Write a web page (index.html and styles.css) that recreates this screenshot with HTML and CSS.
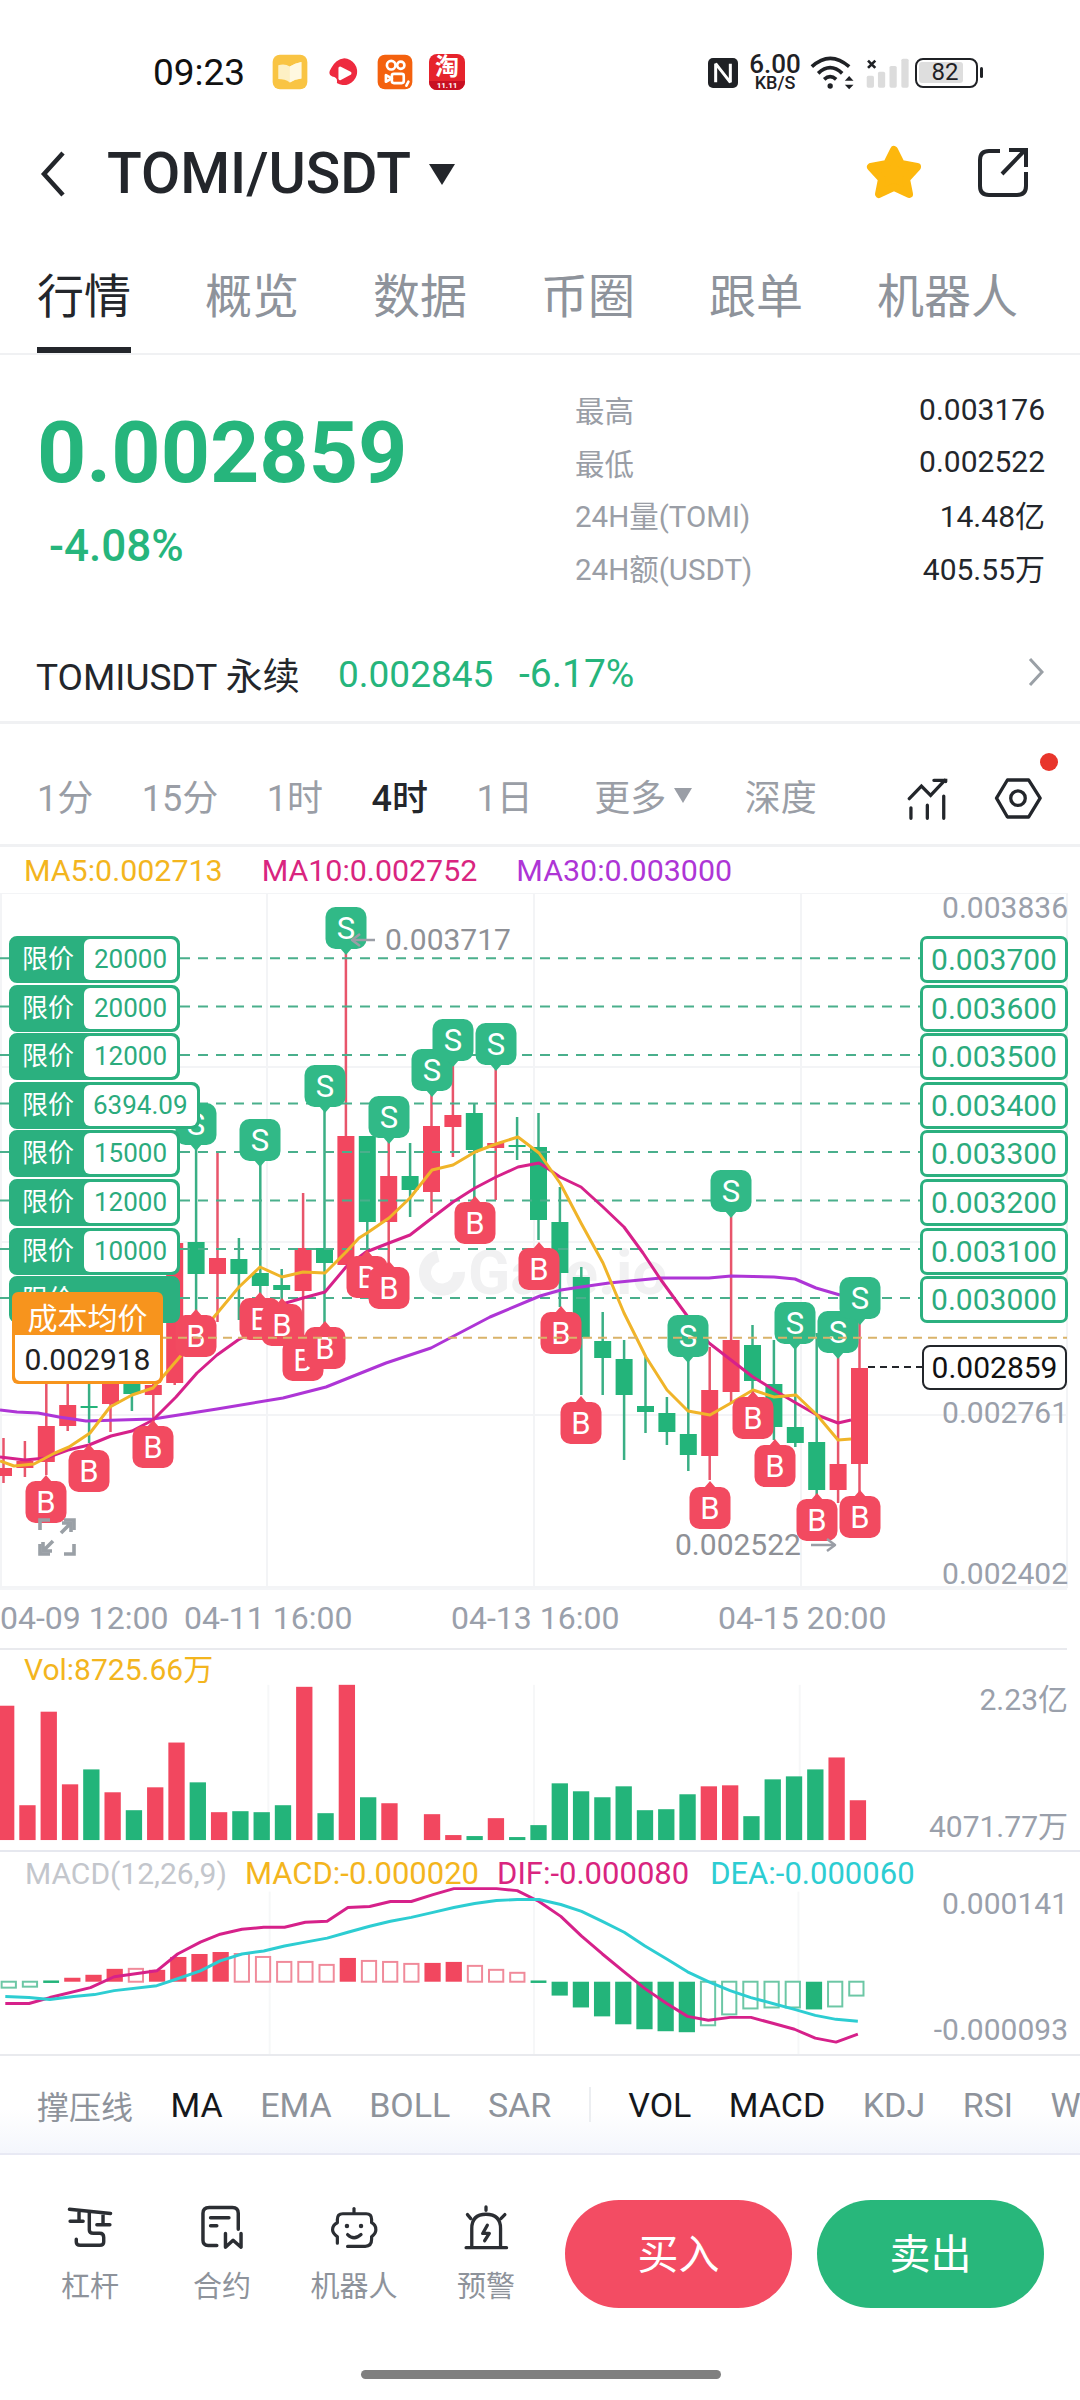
FILE: index.html
```html
<!DOCTYPE html>
<html lang="zh-CN">

<head>
    <meta charset="UTF-8">
    <meta name="viewport" content="width=device-width, initial-scale=1.0">
    <title>TOMI/USDT</title>
    <link rel="stylesheet" href="styles.css">
</head>

<body>
    <!-- 상태바 -->
    <div class="statusBar">
        <span class="clock">09:23</span>
        <svg class="appIcon" viewBox="30 25 115 115">
            <rect x="35" y="30" width="105" height="105" rx="22" fill="#f9c443" />
            <path d="M52 62 Q72 56 87 66 Q102 56 122 52 V102 Q102 104 87 114 Q72 104 52 104 Z" fill="#fdf0c4" />
            <path d="M87 66 Q102 56 122 52 V102 Q102 104 87 114 Z" fill="#fff8e0" />
        </svg>
        <svg class="appIconRed" viewBox="195 38 95 92">
            <path d="M245 42 A41 41 0 1 1 222 118 Q226 100 208 98 Q192 92 205 72 Q218 46 245 42 Z" fill="#ee2a3f" />
            <path d="M232 72 L262 88 L232 104 Z" fill="#fff" stroke="#fff" stroke-width="10" stroke-linejoin="round" />
        </svg>
        <svg class="appIconOrange" viewBox="342 25 115 115">
            <rect x="347" y="30" width="105" height="105" rx="22" fill="#f4610e" />
            <g fill="none" stroke="#fff" stroke-width="8">
                <circle cx="388" cy="62" r="13" />
                <circle cx="417" cy="62" r="11" />
                <rect x="390" y="88" width="36" height="28" rx="6" />
                <path d="M390 102 L372 92 V112 Z" stroke-linejoin="round" />
                <path d="M440 112 L434 124" stroke-linecap="round" />
            </g>
        </svg>
        <div class="taobao">
            <span class="taobaoWord">淘</span>
            <span class="taobaoDate">11.11</span>
        </div>
        <div class="statusRight">
            <div class="nfcBadge">
                <svg viewBox="25 35 88 90" width="30" height="30">
                    <path d="M47 108 V52 L91 108 V52" fill="none" stroke="#fff" stroke-width="9" stroke-linejoin="bevel" />
                </svg>
            </div>
            <div class="netSpeed">
                <span class="netNum">6.00</span>
                <span class="netUnit">KB/S</span>
            </div>
            <svg class="wifiIcon" viewBox="325 25 140 105">
                <g fill="none" stroke="#1f2125" stroke-width="11">
                    <path d="M333 60 Q388 10 445 60" />
                    <path d="M352 80 Q388 46 424 80" />
                    <path d="M370 98 Q388 82 406 98" />
                </g>
                <circle cx="388" cy="118" r="8" fill="#1f2125" />
                <path d="M432 102 L445 88 L458 102 Z M432 114 H458 L445 128 Z" fill="#1f2125" />
            </svg>
            <svg class="signalIcon" viewBox="490 30 140 100">
                <path d="M501 44 L523 66 M523 44 L501 66" stroke="#1f2125" stroke-width="8" />
                <g fill="#dcdcdc">
                    <rect x="497" y="90" width="22" height="36" rx="5" />
                    <rect x="531" y="78" width="22" height="48" rx="5" />
                    <rect x="566" y="60" width="22" height="66" rx="5" />
                    <rect x="602" y="38" width="22" height="88" rx="5" />
                </g>
            </svg>
            <div class="battery">
                <div class="batteryBox"><span class="batteryFill">82</span></div>
                <span class="batteryTip"></span>
            </div>
        </div>
    </div>

    <!-- 상단 타이틀 -->
    <div class="navBar">
        <svg class="backIcon" viewBox="0 0 26 46">
            <path d="M23 2 L4 23 L23 44" fill="none" stroke="#23262b" stroke-width="4.5" />
        </svg>
        <h1 class="pairName">TOMI/USDT</h1>
        <span class="pairArrow"></span>
        <svg class="starIcon" viewBox="0 0 58 56">
            <path d="M29 6 L36 20 L52 23 L41 35 L44 50 L29 43 L14 50 L17 35 L6 23 L22 20 Z" fill="#fdb70d" stroke="#fdb70d" stroke-width="8" stroke-linejoin="round" />
        </svg>
        <svg class="shareIcon" viewBox="979 147 51 51">
            <g fill="none" stroke="#23262b" stroke-width="4">
                <path d="M1001 151 H990 Q981 151 981 160 V186 Q981 195 990 195 H1018 Q1027 195 1027 186 V172" />
                <path d="M1003 174 L1026 150 M1010 150 H1027 V167" />
            </g>
        </svg>
    </div>

    <!-- 탭 메뉴 -->
    <ul class="tabMenu">
        <li class="tabSelect">行情</li>
        <li>概览</li>
        <li>数据</li>
        <li>币圈</li>
        <li>跟单</li>
        <li>机器人</li>
    </ul>

    <!-- 시세 요약 -->
    <div class="summary">
        <div class="priceBox">
            <div class="lastPrice">0.002859</div>
            <div class="changeRate">-4.08%</div>
        </div>
        <dl class="statList">
            <div class="statRow"><dt>最高</dt><dd>0.003176</dd></div>
            <div class="statRow"><dt>最低</dt><dd>0.002522</dd></div>
            <div class="statRow"><dt>24H量(TOMI)</dt><dd>14.48亿</dd></div>
            <div class="statRow"><dt>24H额(USDT)</dt><dd>405.55万</dd></div>
        </dl>
    </div>

    <div class="perpRow">
        <span class="perpName">TOMIUSDT 永续</span>
        <span class="perpPrice">0.002845</span>
        <span class="perpRate">-6.17%</span>
        <svg class="perpArrow" viewBox="0 0 16 30">
            <path d="M2 2 L14 15 L2 28" fill="none" stroke="#9aa0a6" stroke-width="3" />
        </svg>
    </div>

    <!-- 기간 선택 -->
    <div class="periodRow">
        <span>1分</span>
        <span>15分</span>
        <span>1时</span>
        <span class="periodSelect">4时</span>
        <span>1日</span>
        <span class="periodMore">更多<i class="moreArrow"></i></span>
        <span class="periodDepth">深度</span>
        <svg class="drawIcon" viewBox="28 100 125 132">
            <g fill="none" stroke="#23262b" stroke-width="10" stroke-linecap="round">
                <path d="M35 168 L72 130 L100 158 L143 112" />
                <path d="M110 112 H146 V116" />
                <path d="M40 196 V228 M90 188 V228 M140 160 V228" />
            </g>
        </svg>
        <div class="settingBox">
            <svg class="hexIcon" viewBox="288 104 144 124">
                <path d="M295 165 L328 110 H392 L427 165 L392 222 H328 Z" fill="none" stroke="#23262b" stroke-width="10" stroke-linejoin="round" />
                <circle cx="360" cy="165" r="22" fill="none" stroke="#23262b" stroke-width="10" />
            </svg>
            <span class="redDot"></span>
        </div>
    </div>

    <div class="maRow">
        <span class="maFive">MA5:0.002713</span>
        <span class="maTen">MA10:0.002752</span>
        <span class="maThirty">MA30:0.003000</span>
    </div>

    <!-- 메인 차트 -->
    <div class="klineBox">
        <svg class="chartSvg" id="klineSvg" viewBox="0 893 1080 695"></svg>

        <span class="axisLabel axisTop">0.003836</span>
        <span class="axisLabel axisMid">0.002761</span>
        <span class="axisLabel axisLow">0.002402</span>
        <span class="extreme extremeHigh">0.003717</span>
        <span class="extreme extremeLow">0.002522</span>

        <div class="limitLeft">
            <div class="limitTag"><span class="limitName">限价</span><span class="limitQty">20000</span></div>
            <div class="limitTag"><span class="limitName">限价</span><span class="limitQty">20000</span></div>
            <div class="limitTag"><span class="limitName">限价</span><span class="limitQty">12000</span></div>
            <div class="limitTag"><span class="limitName">限价</span><span class="limitQty">6394.09</span></div>
            <div class="limitTag"><span class="limitName">限价</span><span class="limitQty">15000</span></div>
            <div class="limitTag"><span class="limitName">限价</span><span class="limitQty">12000</span></div>
            <div class="limitTag"><span class="limitName">限价</span><span class="limitQty">10000</span></div>
            <div class="limitTag limitLast"><span class="limitName">限价</span></div>
        </div>

        <div class="limitRight">
            <div class="limitPrice">0.003700</div>
            <div class="limitPrice">0.003600</div>
            <div class="limitPrice">0.003500</div>
            <div class="limitPrice">0.003400</div>
            <div class="limitPrice">0.003300</div>
            <div class="limitPrice">0.003200</div>
            <div class="limitPrice">0.003100</div>
            <div class="limitPrice">0.003000</div>
        </div>

        <div class="costTag">
            <div class="costTitle">成本均价</div>
            <div class="costValue">0.002918</div>
        </div>

        <div class="nowPrice">0.002859</div>

        <svg class="fullIcon" viewBox="0 0 38 38">
            <g fill="none" stroke="#9aa0a6" stroke-width="3.6">
                <path d="M2 12 V2 H12 M26 2 H36 V12 M2 26 V36 H12 M36 26 V36 H26" />
                <path d="M33 5 L23 15 M24 5 H33 V14 M5 33 L15 23 M5 24 V33 H14" />
            </g>
        </svg>
    </div>

    <div class="timeAxis">
        <span>04-09 12:00</span>
        <span>04-11 16:00</span>
        <span>04-13 16:00</span>
        <span>04-15 20:00</span>
    </div>

    <!-- 거래량 -->
    <div class="volPanel">
        <svg class="chartSvg" id="volSvg" viewBox="0 1650 1080 201"></svg>
        <div class="panelLegend"><span class="maFive">Vol:8725.66万</span></div>
        <span class="axisLabel volTop">2.23亿</span>
        <span class="axisLabel volLow">4071.77万</span>
    </div>

    <!-- MACD -->
    <div class="macdPanel">
        <svg class="chartSvg" id="macdSvg" viewBox="0 1852 1080 204"></svg>
        <div class="panelLegend macdLegend">
            <span class="macdName">MACD(12,26,9)</span>
            <span class="maFive">MACD:-0.000020</span>
            <span class="maTen">DIF:-0.000080</span>
            <span class="deaText">DEA:-0.000060</span>
        </div>
        <span class="axisLabel macdTop">0.000141</span>
        <span class="axisLabel macdLow">-0.000093</span>
    </div>

    <!-- 지표 선택 -->
    <div class="indicatorRow">
        <span class="indicatorFirst">撑压线</span>
        <span class="indicatorOn">MA</span>
        <span>EMA</span>
        <span>BOLL</span>
        <span>SAR</span>
        <i class="indicatorLine"></i>
        <span class="indicatorOn">VOL</span>
        <span class="indicatorOn">MACD</span>
        <span>KDJ</span>
        <span>RSI</span>
        <span>WR</span>
    </div>

    <!-- 하단 버튼 -->
    <div class="bottomBar">
        <div class="toolItem">
            <svg class="toolIcon" viewBox="50 48 140 130">
                <g fill="none" stroke="#2b2e33" stroke-width="10" stroke-linecap="round">
                    <path d="M60 60 L180 72 M88 63 V95 M62 95 H100 M158 72 V105 M140 105 H178" />
                    <path d="M118 68 V120 Q118 130 130 130 H148 Q160 130 160 142 V155 Q160 165 148 165 H92 Q80 165 80 155 V147" />
                </g>
            </svg>
            <span>杠杆</span>
        </div>
        <div class="toolItem">
            <svg class="toolIcon" viewBox="450 48 130 130">
                <g fill="none" stroke="#2b2e33" stroke-width="10" stroke-linecap="round" stroke-linejoin="round">
                    <path d="M500 165 H475 Q460 165 460 150 V72 Q460 55 478 55 H545 Q562 55 562 72 V118" />
                    <path d="M482 85 H535 M482 108 H500" />
                    <path d="M525 130 V170 L547 150 L570 170 V130" />
                </g>
            </svg>
            <span>合约</span>
        </div>
        <div class="toolItem">
            <svg class="toolIcon" viewBox="835 48 150 130">
                <g fill="none" stroke="#2b2e33" stroke-width="10" stroke-linecap="round" stroke-linejoin="round">
                    <path d="M910 54 V68" />
                    <path d="M890 172 H945 Q965 172 965 150 V142 Q980 130 978 118 Q978 105 965 98 V88 Q965 70 948 70 H875 Q858 70 858 88 V98 Q843 105 843 120 Q843 130 858 142 V162" />
                    <path d="M890 135 Q910 155 932 135" />
                </g>
                <circle cx="888" cy="108" r="7" fill="#2b2e33" />
                <circle cx="932" cy="108" r="7" fill="#2b2e33" />
            </svg>
            <span>机器人</span>
        </div>
        <div class="toolItem">
            <svg class="toolIcon" viewBox="1240 44 136 136">
                <g fill="none" stroke="#2b2e33" stroke-width="10" stroke-linecap="round" stroke-linejoin="round">
                    <path d="M1248 173 H1370" />
                    <path d="M1265 170 V115 Q1265 72 1308 72 Q1352 72 1352 115 V170" />
                    <path d="M1308 50 V60 M1252 73 L1262 85 M1365 73 L1353 85" />
                    <path d="M1312 105 L1298 130 H1318 L1304 152" />
                </g>
            </svg>
            <span>预警</span>
        </div>
        <div class="tradeBtn buyBtn">买入</div>
        <div class="tradeBtn sellBtn">卖出</div>
    </div>

    <div class="homeBar"></div>

    <script src="chart.js"></script>
</body>

</html>
```

FILE: styles.css
```css
* {
    box-sizing: border-box;
}

body {
    margin: 0;
    width: 1080px;
    height: 2400px;
    overflow: hidden;
    background-color: white;
    color: #23262b;
    font-family: Roboto, "Noto Sans CJK SC", sans-serif;
}

svg {
    display: block;
}

/* status bar */
.statusBar {
    display: flex;
    align-items: center;
    height: 144px;
    padding-left: 153px;
}

.clock {
    font-size: 37px;
    font-weight: 400;
    color: #111;
    width: 118px;
}

.appIcon {
    width: 38px;
    height: 38px;
    margin-right: 19px;
}

.appIconRed {
    width: 31px;
    height: 30px;
    margin-right: 17px;
}

.appIconOrange {
    width: 38px;
    height: 38px;
    margin-right: 15px;
}

.taobao {
    width: 36px;
    height: 36px;
    border-radius: 8px;
    background-color: #e6232c;
    color: white;
    display: flex;
    flex-direction: column;
    align-items: center;
    overflow: hidden;
}

.taobaoWord {
    font-size: 24px;
    line-height: 27px;
    font-weight: 700;
}

.taobaoDate {
    font-size: 8px;
    line-height: 9px;
    font-weight: 700;
    width: 100%;
    text-align: center;
    background-color: #c81022;
}

.statusRight {
    display: flex;
    align-items: center;
    position: absolute;
    left: 708px;
    top: 54px;
}

.nfcBadge {
    width: 30px;
    height: 30px;
    border-radius: 5px;
    background-color: #1f2125;
    margin-right: 11px;
}

.netSpeed {
    display: flex;
    flex-direction: column;
    align-items: center;
    width: 52px;
    margin-right: 8px;
    color: #1f2125;
}

.netNum {
    font-size: 26px;
    line-height: 20px;
    font-weight: 500;
}

.netUnit {
    font-size: 18px;
    line-height: 17px;
    font-weight: 500;
}

.wifiIcon {
    width: 47px;
    height: 35px;
    margin-right: 8px;
}

.signalIcon {
    width: 47px;
    height: 33px;
    margin-right: 4px;
}

.battery {
    display: flex;
    align-items: center;
}

.batteryBox {
    width: 63px;
    height: 30px;
    border: 2.5px solid #1f2125;
    border-radius: 8px;
    padding: 2px;
}

.batteryFill {
    display: block;
    width: 44px;
    height: 21px;
    border-radius: 3px;
    background-color: #dedede;
    font-size: 24px;
    line-height: 21px;
    text-align: center;
    color: #1f2125;
    padding-left: 8px;
    white-space: nowrap;
}

.batteryTip {
    width: 3px;
    height: 11px;
    margin-left: 2px;
    background-color: #1f2125;
    border-radius: 2px;
}

/* title bar */
.navBar {
    display: flex;
    align-items: center;
    height: 60px;
    padding-left: 40px;
}

.backIcon {
    width: 26px;
    height: 46px;
}

.pairName {
    margin: 0 0 0 41px;
    font-size: 57px;
    font-weight: 500;
    line-height: 60px;
    color: #23262b;
}

.pairArrow {
    width: 0;
    height: 0;
    margin-left: 18px;
    border-left: 13px solid transparent;
    border-right: 13px solid transparent;
    border-top: 21px solid #23262b;
}

.starIcon {
    width: 58px;
    height: 56px;
    position: absolute;
    left: 865px;
    top: 144px;
}

.shareIcon {
    width: 51px;
    height: 51px;
    position: absolute;
    left: 978px;
    top: 147px;
}

/* tabs */
.tabMenu {
    display: flex;
    gap: 74px;
    margin: 0;
    padding: 66px 0 0 37px;
    height: 151px;
    list-style: none;
    border-bottom: 2px solid #f0f1f3;
}

.tabMenu li {
    font-size: 47px;
    line-height: 54px;
    height: 83px;
    color: #8e939b;
}

.tabMenu li.tabSelect {
    color: #23262b;
    border-bottom: 6px solid #23262b;
}

/* summary */
.summary {
    display: flex;
    height: 274px;
}

.priceBox {
    width: 575px;
    padding: 54px 0 0 37px;
}

.lastPrice {
    font-size: 86px;
    line-height: 88px;
    font-weight: 700;
    color: #26b57c;
}

.changeRate {
    margin-top: 25px;
    padding-left: 12px;
    font-size: 44px;
    line-height: 48px;
    font-weight: 500;
    color: #26b57c;
}

.statList {
    width: 470px;
    margin: 0;
    padding-top: 28px;
}

.statRow {
    display: flex;
    justify-content: space-between;
    height: 52.5px;
    align-items: center;
}

.statRow dt {
    font-size: 29.5px;
    color: #9a9ea6;
}

.statRow dd {
    margin: 0;
    font-size: 30px;
    color: #23262b;
}

/* perpetual row */
.perpRow {
    display: flex;
    align-items: center;
    height: 95px;
    padding: 0 0 2px 36px;
    border-bottom: 3px solid #f0f1f3;
    font-size: 37px;
}

.perpName {
    width: 302px;
}

.perpPrice {
    color: #26b57c;
    width: 181px;
}

.perpRate {
    color: #26b57c;
    font-size: 39px;
}

.perpArrow {
    width: 16px;
    height: 30px;
    margin-left: auto;
    margin-right: 36px;
    margin-bottom: 4px;
}

/* period row */
.periodRow {
    display: flex;
    align-items: center;
    gap: 48.5px;
    height: 123px;
    padding: 22px 0 0 37px;
    border-bottom: 3px solid #f0f1f3;
    font-size: 36px;
    color: #9a9ea6;
}

.periodSelect {
    color: #23262b;
    font-weight: 500;
}

.periodMore {
    display: flex;
    align-items: center;
    margin-left: 13px;
}

.moreArrow {
    width: 0;
    height: 0;
    margin-left: 8px;
    border-left: 9px solid transparent;
    border-right: 9px solid transparent;
    border-top: 15px solid #9a9ea6;
}

.periodDepth {
    margin-left: 4px;
}

.drawIcon {
    width: 41px;
    height: 44px;
    margin-left: 42px;
    margin-top: 6px;
}

.settingBox {
    position: relative;
    margin-left: -3px;
    margin-top: 6px;
}

.hexIcon {
    width: 48px;
    height: 41px;
}

.redDot {
    position: absolute;
    left: 46px;
    top: -25px;
    width: 18px;
    height: 18px;
    border-radius: 50%;
    background-color: #e8352b;
}

/* MA legend */
.maRow {
    display: flex;
    gap: 39px;
    align-items: center;
    height: 46px;
    padding-left: 24px;
    font-size: 30.4px;
}

.maFive {
    color: #f3b51e;
}

.maTen {
    color: #d9257f;
}

.maThirty {
    color: #ae35d6;
}

/* main chart */
.klineBox {
    position: relative;
    height: 695px;
}

.chartSvg {
    position: absolute;
    left: 0;
    top: 0;
    width: 100%;
    height: 100%;
}

.axisLabel {
    position: absolute;
    right: 12px;
    font-size: 30px;
    line-height: 36px;
    color: #9aa0ab;
}

.axisTop {
    top: -3px;
}

.axisMid {
    top: 502px;
}

.axisLow {
    top: 663px;
}

.extreme {
    position: absolute;
    font-size: 30px;
    line-height: 36px;
    color: #8e9096;
}

.extremeHigh {
    left: 385px;
    top: 29px;
}

.extremeLow {
    left: 675px;
    top: 634px;
}

.limitLeft,
.limitRight {
    position: absolute;
    top: 43px;
    display: flex;
    flex-direction: column;
    gap: 1.6px;
}

.limitLeft {
    left: 9px;
    align-items: flex-start;
}

.limitRight {
    left: 920px;
}

.limitTag {
    display: flex;
    height: 47px;
    border: 3px solid #2bb07f;
    border-radius: 8px;
    background-color: #2bb07f;
}

.limitLast {
    width: 171px;
}

.limitName {
    width: 72px;
    padding-left: 10px;
    font-size: 26px;
    line-height: 40px;
    color: white;
}

.limitQty {
    min-width: 93px;
    padding: 0 9px;
    background-color: white;
    border-radius: 6px;
    font-size: 26px;
    line-height: 41px;
    color: #2bab7d;
    text-align: center;
}

.limitPrice {
    width: 148px;
    height: 47px;
    border: 3px solid #2bb07f;
    border-radius: 7px;
    background-color: white;
    font-size: 30px;
    line-height: 41px;
    text-align: center;
    color: #2bab7d;
}

.costTag {
    position: absolute;
    left: 12px;
    top: 399px;
    width: 151px;
    height: 92px;
    border-radius: 6px;
    background-color: #f7941d;
    padding: 6px 3px 3px;
}

.costTitle {
    height: 37px;
    font-size: 30px;
    line-height: 41px;
    color: white;
    text-align: center;
}

.costValue {
    height: 46px;
    border-radius: 0 0 5px 5px;
    background-color: white;
    font-size: 30px;
    line-height: 49px;
    color: #222;
    text-align: center;
}

.nowPrice {
    position: absolute;
    left: 922px;
    top: 452px;
    width: 145px;
    height: 45px;
    border: 2px solid #23262b;
    border-radius: 8px;
    background-color: white;
    font-size: 30px;
    line-height: 41px;
    text-align: center;
    color: #111;
}

.fullIcon {
    position: absolute;
    left: 38px;
    top: 625px;
    width: 38px;
    height: 38px;
}

/* time axis */
.timeAxis {
    display: flex;
    align-items: center;
    width: 1067px;
    height: 62px;
    padding: 0 0 2px 0;
    border-bottom: 2px solid #e9eaee;
    border-top: 2px solid #f4f5f7;
    font-size: 32px;
    color: #9aa0ab;
}

.timeAxis span {
    width: 167px;
    margin-right: 100px;
    white-space: nowrap;
}

.timeAxis span:first-child {
    margin-right: 17px;
}

/* volume and macd panels */
.volPanel {
    position: relative;
    height: 202px;
    border-bottom: 2px solid #e6e8ef;
}

.macdPanel {
    position: relative;
    height: 204px;
    border-bottom: 2px solid #e9eaee;
    overflow: hidden;
}

.panelLegend {
    position: relative;
    padding: 2px 0 0 24px;
    font-size: 30px;
    line-height: 36px;
    white-space: nowrap;
}

.macdLegend {
    display: flex;
    gap: 18px;
    padding: 4px 0 0 25px;
    font-size: 31px;
}

.macdName {
    color: #c3c6cc;
    font-size: 30px;
}

.deaText {
    color: #2dcdd2;
    margin-left: 3px;
}

.volTop {
    top: 32px;
}

.volLow {
    top: 159px;
}

.macdTop {
    top: 34px;
}

.macdLow {
    top: 160px;
}

/* indicator row */
.indicatorRow {
    display: flex;
    align-items: center;
    gap: 37.5px;
    height: 99px;
    padding: 0 0 0 37px;
    overflow: hidden;
    white-space: nowrap;
    font-size: 34px;
    color: #8e939b;
    background: linear-gradient(#ffffff 55%, #f4f6fc);
    border-bottom: 2px solid #e8e9f4;
}

.indicatorFirst {
    font-size: 32px;
}

.indicatorOn {
    color: #15181c;
}

.indicatorLine {
    flex: none;
    width: 2px;
    height: 35px;
    background-color: #eceef1;
}

/* bottom bar */
.bottomBar {
    display: flex;
    align-items: flex-start;
    padding: 45px 0 0 24px;
    height: 153px;
}

.toolItem {
    display: flex;
    flex-direction: column;
    align-items: center;
    width: 132px;
    padding-top: 5px;
    font-size: 29px;
    line-height: 40px;
    color: #8e939b;
}

.toolIcon {
    width: 48px;
    height: 45px;
    margin-bottom: 17px;
}

.tradeBtn {
    width: 227px;
    height: 108px;
    border-radius: 54px;
    font-size: 41px;
    line-height: 110px;
    text-align: center;
    color: white;
}

.buyBtn {
    margin-left: 13px;
    background-color: #f34c63;
}

.sellBtn {
    margin-left: 25px;
    background-color: #28b77b;
}

.homeBar {
    width: 360px;
    height: 9px;
    margin: 62px 0 0 361px;
    border-radius: 5px;
    background-color: #7f7f7f;
}
```

FILE: chart.js
```js
var RED = '#f2475f';
var GREEN = '#23b47a';
var NS = 'http://www.w3.org/2000/svg';

// 봉 위치: n번째 봉의 x 좌표
function barX(n) {
    return 3.5 + 21.4 * n;
}

// svg 요소 생성
function add(parent, tag, attrs, text) {
    var el = document.createElementNS(NS, tag);
    for (var key in attrs) {
        el.setAttribute(key, attrs[key]);
    }
    if (text) {
        el.textContent = text;
    }
    parent.appendChild(el);
    return el;
}

function polyline(parent, points, color, width) {
    add(parent, 'polyline', {
        points: points.map(function (p) { return p[0] + ',' + p[1]; }).join(' '),
        fill: 'none',
        stroke: color,
        'stroke-width': width,
        'stroke-linejoin': 'round'
    });
}

function hLine(parent, x1, x2, y, color, width, dash) {
    var attrs = { x1: x1, x2: x2, y1: y, y2: y, stroke: color, 'stroke-width': width };
    if (dash) {
        attrs['stroke-dasharray'] = dash;
    }
    add(parent, 'line', attrs);
}

function vLine(parent, x, y1, y2, color, width) {
    add(parent, 'line', { x1: x, x2: x, y1: y1, y2: y2, stroke: color, 'stroke-width': width });
}

// 봉 데이터: [상승여부, 꼬리위, 꼬리아래, 몸통위, 몸통아래]
var candles = [
    [1, 1438, 1483, 1468, 1476], [1, 1441, 1477, 1461, 1468], [1, 1380, 1475, 1426, 1462],
    [1, 1380, 1431, 1405, 1426], [0, 1380, 1443, 1406, 1408], [1, 1370, 1432, 1370, 1404],
    [0, 1375, 1411, 1375, 1394], [1, 1378, 1426, 1385, 1395], [1, 1243, 1385, 1243, 1383],
    [0, 1147, 1312, 1242, 1274], [1, 1152, 1322, 1258, 1274], [0, 1238, 1320, 1259, 1274],
    [0, 1163, 1298, 1273, 1286], [0, 1269, 1303, 1285, 1290], [1, 1193, 1337, 1248, 1291],
    [0, 1107, 1327, 1248, 1263], [1, 950, 1265, 1136, 1265], [0, 1136, 1257, 1136, 1222],
    [1, 1140, 1267, 1176, 1222], [0, 1143, 1217, 1176, 1190], [1, 1093, 1213, 1126, 1192],
    [1, 1063, 1157, 1115, 1127], [0, 1103, 1200, 1113, 1150], [1, 1067, 1200, 1143, 1148],
    [0, 1117, 1160, 1145, 1147], [0, 1113, 1240, 1147, 1220], [0, 1187, 1307, 1222, 1273],
    [0, 1267, 1395, 1277, 1337], [0, 1312, 1395, 1341, 1358], [0, 1340, 1460, 1359, 1395],
    [0, 1357, 1433, 1406, 1412], [0, 1397, 1445, 1413, 1432], [0, 1360, 1471, 1434, 1455],
    [1, 1347, 1480, 1390, 1456], [1, 1215, 1403, 1340, 1392], [0, 1325, 1397, 1345, 1381],
    [0, 1340, 1440, 1384, 1427], [0, 1340, 1447, 1427, 1443], [0, 1333, 1497, 1442, 1490],
    [1, 1352, 1503, 1464, 1490], [1, 1323, 1497, 1368, 1464]
];

var ma5 = [[0, 1461], [14, 1466], [34, 1464], [55, 1453], [69, 1447], [90, 1433], [110, 1407], [132, 1395], [153, 1388], [166, 1373], [214, 1317], [239, 1287], [260, 1267], [282, 1277], [303, 1272], [325, 1273], [346, 1252], [359, 1238], [367, 1233], [389, 1218], [410, 1198], [432, 1170], [453, 1165], [475, 1152], [496, 1144], [518, 1137], [539, 1153], [560, 1183], [581, 1223], [603, 1263], [624, 1313], [646, 1357], [667, 1390], [688, 1411], [710, 1415], [731, 1403], [753, 1390], [774, 1397], [796, 1395], [817, 1415], [838, 1440], [851, 1439]];
var ma10 = [[0, 1457], [25, 1460], [46, 1458], [68, 1450], [89, 1445], [111, 1436], [132, 1431], [153, 1420], [176, 1397], [197, 1373], [217, 1355], [238, 1340], [248, 1335], [272, 1307], [303, 1298], [325, 1292], [346, 1267], [366, 1252], [389, 1243], [410, 1235], [432, 1218], [453, 1202], [475, 1188], [496, 1177], [518, 1167], [539, 1163], [547, 1168], [560, 1177], [581, 1187], [603, 1207], [624, 1227], [643, 1253], [661, 1280], [688, 1317], [709, 1343], [731, 1360], [753, 1377], [774, 1390], [796, 1403], [817, 1415], [838, 1423], [851, 1420]];
var ma30 = [[0, 1410], [17, 1412], [38, 1413], [59, 1417], [86, 1421], [153, 1419], [217, 1409], [283, 1398], [326, 1387], [386, 1363], [431, 1348], [490, 1317], [540, 1296], [561, 1290], [581, 1287], [609, 1283], [661, 1278], [709, 1278], [731, 1276], [774, 1277], [795, 1279], [816, 1288], [840, 1295]];

// 매매 표시: [종류, x, 위쪽 y]
var marks = [
    ['B', 46, 1481], ['B', 89, 1450], ['B', 153, 1426], ['S', 196, 1103], ['B', 196, 1315],
    ['S', 260, 1119], ['B', 260, 1298], ['B', 282, 1304], ['B', 303, 1339], ['S', 325, 1065],
    ['B', 325, 1327], ['S', 346, 907], ['B', 367, 1256], ['S', 389, 1096], ['B', 389, 1267],
    ['S', 432, 1049], ['S', 453, 1019], ['B', 475, 1202], ['S', 496, 1023], ['B', 539, 1248],
    ['B', 561, 1312], ['B', 581, 1402], ['S', 688, 1315], ['B', 710, 1487], ['S', 731, 1170],
    ['B', 753, 1397], ['B', 775, 1445], ['S', 795, 1302], ['B', 817, 1499], ['S', 838, 1311],
    ['S', 860, 1277], ['B', 860, 1496]
];

function drawMark(svg, mark) {
    var isSell = mark[0] == 'S';
    var x = mark[1];
    var top = mark[2];
    var color = isSell ? '#31b987' : '#f24a60';
    var tip = isSell
        ? [[x - 6, top + 41], [x, top + 48], [x + 6, top + 41]]
        : [[x - 6, top + 1], [x, top - 6], [x + 6, top + 1]];

    add(svg, 'polygon', {
        points: tip.map(function (p) { return p.join(','); }).join(' '),
        fill: color
    });
    add(svg, 'rect', { x: x - 20.5, y: top, width: 41, height: 42, rx: 10, fill: color });
    add(svg, 'text', {
        x: x,
        y: top + 32,
        fill: 'white',
        'font-size': 31,
        'font-family': 'Roboto, sans-serif',
        'text-anchor': 'middle'
    }, mark[0]);
}

function drawKline() {
    var svg = document.getElementById('klineSvg');
    var grid = '#f3f4f6';

    [893, 1067, 1242, 1415, 1587].forEach(function (y) {
        hLine(svg, 0, 1067, y, grid, 2);
    });
    [1, 267, 534, 801, 1067].forEach(function (x) {
        vLine(svg, x, 893, 1588, grid, 2);
    });

    // 워터마크
    add(svg, 'path', {
        d: 'M459 1272 A17 17 0 1 1 438 1256',
        fill: 'none',
        stroke: '#f1f1f2',
        'stroke-width': 12
    });
    add(svg, 'text', {
        x: 468,
        y: 1294,
        fill: '#f1f1f2',
        'font-size': 62,
        'font-weight': 700,
        'font-family': 'Roboto, sans-serif'
    }, 'Gate.io');

    candles.forEach(function (c, n) {
        var x = barX(n);
        vLine(svg, x, c[1], c[2], c[0] ? '#e8556b' : '#3aaf85', 2.5);
        add(svg, 'rect', { x: x - 8.5, y: c[3], width: 17, height: c[4] - c[3], fill: c[0] ? RED : GREEN });
    });

    // 지정가 점선
    [958.3, 1006.5, 1055, 1103.5, 1152, 1200.5, 1249, 1298].forEach(function (y) {
        hLine(svg, 0, 920, y, '#4aaf8c', 2, '10 8');
    });

    polyline(svg, ma30, '#ae35d6', 3);
    polyline(svg, ma10, '#d6218a', 3);
    polyline(svg, ma5, '#f0b429', 3);

    marks.forEach(function (m) {
        drawMark(svg, m);
    });

    hLine(svg, 163, 1067, 1337.7, '#d9b36a', 2, '9 6');
    hLine(svg, 868, 922, 1367, '#23262b', 2, '7 5');

    // 최고 / 최저 화살표
    polyline(svg, [[375, 940], [352, 940]], '#9a9ea6', 2.5);
    polyline(svg, [[360, 934], [352, 940], [360, 946]], '#9a9ea6', 2.5);
    polyline(svg, [[811, 1545], [835, 1545]], '#9a9ea6', 2.5);
    polyline(svg, [[827, 1539], [835, 1545], [827, 1551]], '#9a9ea6', 2.5);
}

// 거래량: [상승여부, 막대 위쪽(px)]
var volumes = [
    [1, 1706], [1, 1806], [1, 1712], [1, 1785], [0, 1770], [1, 1793], [0, 1811], [1, 1788],
    [1, 1743], [0, 1783], [1, 1813], [0, 1812], [0, 1813], [0, 1806], [1, 1687], [0, 1814],
    [1, 1685], [0, 1798], [1, 1804], null, [1, 1815], [1, 1836], [0, 1837], [1, 1819],
    [0, 1838], [0, 1826], [0, 1784], [0, 1792], [0, 1798], [0, 1787], [0, 1811], [0, 1810],
    [0, 1795], [1, 1787], [1, 1786], [0, 1817], [0, 1780], [0, 1777], [0, 1770], [1, 1758],
    [1, 1801]
];

function drawVolume() {
    var svg = document.getElementById('volSvg');
    [267, 534, 801].forEach(function (x) {
        vLine(svg, x, 1685, 1841, '#f6f7f8', 2);
    });
    volumes.forEach(function (v, n) {
        if (!v) {
            return;
        }
        add(svg, 'rect', {
            x: barX(n) - 8.2,
            y: v[1],
            width: 16.4,
            height: 1841 - v[1],
            fill: v[0] ? RED : GREEN
        });
    });
}

// MACD 막대: [끝 y(px), 채움 여부]
var macdBars = [
    [1989, 0], [1988, 0], [1983, 2], [1979, 1], [1976, 1], [1970, 1], [1970, 0], [1971, 1],
    [1958, 1], [1955, 1], [1953, 1], [1955, 0], [1958, 0], [1963, 0], [1963, 0], [1966, 0],
    [1959, 1], [1962, 0], [1963, 0], [1965, 0], [1964, 1], [1963, 1], [1967, 0], [1971, 0],
    [1974, 0], [1984, 2], [1997, 1], [2009, 1], [2018, 1], [2026, 1], [2031, 1], [2033, 1],
    [2034, 1], [2027, 0], [2016, 0], [2010, 0], [2009, 0], [2009, 0], [2011, 1], [2008, 0],
    [1997, 0]
];

var difLine = [[0, 2005], [24, 2005], [45, 1999], [86, 1989], [110, 1978], [153, 1972], [174, 1955], [197, 1943], [217, 1935], [239, 1930], [261, 1928], [282, 1928], [303, 1923], [325, 1922], [346, 1908], [368, 1907], [389, 1902], [410, 1902], [432, 1895], [453, 1889], [474, 1889], [496, 1889], [517, 1891], [539, 1902], [561, 1917], [582, 1937], [603, 1955], [625, 1973], [646, 1990], [668, 2005], [689, 2018], [710, 2022], [732, 2019], [753, 2019], [775, 2025], [797, 2031], [818, 2040], [839, 2044], [861, 2036]];
var deaLine = [[0, 1998], [24, 1999], [45, 2001], [69, 1998], [90, 1996], [110, 1992], [153, 1987], [174, 1980], [197, 1972], [217, 1962], [239, 1955], [261, 1952], [282, 1947], [303, 1943], [325, 1939], [346, 1933], [368, 1927], [389, 1922], [410, 1918], [432, 1913], [453, 1908], [474, 1904], [496, 1901], [517, 1900], [539, 1900], [561, 1905], [582, 1912], [603, 1922], [625, 1933], [646, 1947], [668, 1960], [689, 1973], [710, 1983], [732, 1992], [753, 1999], [775, 2005], [797, 2011], [818, 2017], [839, 2021], [861, 2023]];

function drawMacd() {
    var svg = document.getElementById('macdSvg');
    var base = 1983;
    [267, 534, 801].forEach(function (x) {
        vLine(svg, x, 1892, 2056, '#f6f7f8', 2);
    });

    macdBars.forEach(function (b, n) {
        var up = b[0] < base;
        var color = up ? '#f2475f' : GREEN;
        var top = Math.min(b[0], base);
        var height = Math.abs(b[0] - base);
        if (b[1] == 2) {
            hLine(svg, barX(n) - 8, barX(n) + 8, base, color, 2.5);
        } else if (b[1] == 1) {
            add(svg, 'rect', { x: barX(n) - 8.2, y: top, width: 16.4, height: height, fill: color });
        } else {
            add(svg, 'rect', {
                x: barX(n) - 7.2,
                y: top,
                width: 14.4,
                height: height,
                fill: 'white',
                stroke: up ? '#f08a9a' : '#6cc7a5',
                'stroke-width': 2
            });
        }
    });

    polyline(svg, difLine, '#d6218a', 3);
    polyline(svg, deaLine, '#2dcdd2', 3);
}

drawKline();
drawVolume();
drawMacd();
```
